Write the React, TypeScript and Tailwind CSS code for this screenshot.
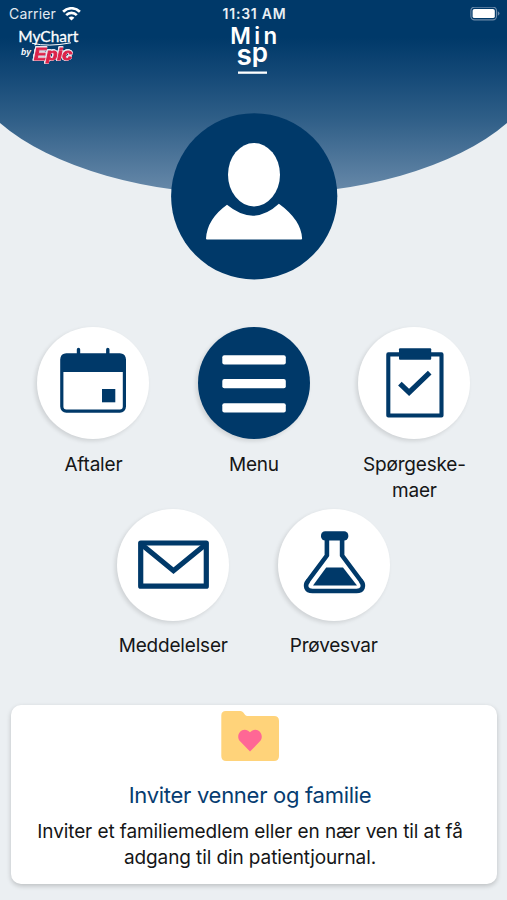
import type { ReactNode } from "react";

function StatusBar() {
  return (
    <div className="flex h-7 items-center justify-between pl-[9px] pr-[7px] text-white">
      <div className="flex w-[180px] items-center gap-[6px] text-[14px] leading-7 tracking-[0.15px] text-[#e3eaf1]">
        <span>Carrier</span>
        <svg width="19" height="15" viewBox="0 0 19 15" fill="none" stroke="white">
          <path d="M1.1 4.7 A12 12 0 0 1 17.9 4.7" strokeWidth="2.7" />
          <path d="M4.2 8.1 A7.4 7.4 0 0 1 14.8 8.1" strokeWidth="2.6" />
          <path d="M9.5 13.6 L6.6 10.7 A4.3 4.3 0 0 1 12.4 10.7 Z" fill="white" stroke="none" />
        </svg>
      </div>
      <div className="whitespace-nowrap text-[14px] font-semibold leading-7 tracking-[0.75px] text-[#e9eff4]">11:31 AM</div>
      <div className="flex w-[180px] justify-end">
        <svg width="30" height="14" viewBox="0 0 30 14" fill="none">
          <rect x="0.9" y="0.1" width="25.6" height="12.8" rx="3.6" stroke="#6c8baa" strokeWidth="1.1" />
          <rect x="2.6" y="1.9" width="22.2" height="9.2" rx="1.9" fill="white" />
          <path d="M27.8 4.2 q1.7 .7 1.7 2.3 q0 1.6 -1.7 2.3 Z" fill="#6c8baa" />
        </svg>
      </div>
    </div>
  );
}

function Logos() {
  return (
    <div className="flex h-[50px] justify-between pl-[17px] pr-[17px]">
      <svg className="overflow-visible" width="64" height="40" viewBox="0 0 64 40">
        <text x="1.2" y="14.3" textLength="60" lengthAdjust="spacingAndGlyphs" fill="white" fontFamily="Lato, sans-serif" fontSize="16" stroke="white" strokeWidth=".3">MyChart</text>
        <path d="M15 15.2 Q31 19.2 54 14.8" stroke="white" strokeWidth="1" fill="none" />
        <text x="4" y="27" fill="white" fontFamily="Liberation Sans, sans-serif" fontSize="8.5" fontWeight="700" fontStyle="italic">by</text>
        <text
          className="[filter:drop-shadow(0.6px_0_0_#e9e8f0)_drop-shadow(-0.6px_0_0_#e9e8f0)_drop-shadow(0_0.6px_0_#e9e8f0)_drop-shadow(0_-0.6px_0_#e9e8f0)]"
          x="17" y="31.8" textLength="38.5" lengthAdjust="spacingAndGlyphs" fill="#dc2249" stroke="#dc2249" strokeWidth=".9"
          fontFamily="Liberation Sans, sans-serif" fontSize="16" fontWeight="700" fontStyle="italic"
        >
          Epic
        </text>
      </svg>
      <svg className="overflow-visible" width="60" height="50" viewBox="224 28 60 50" fill="white" fontFamily="Inter, sans-serif" fontWeight="600">
        <text x="230.2" y="44" textLength="47" lengthAdjust="spacing" fontSize="22.3">Min</text>
        <text y="65.4">
          <tspan x="236.6" fontSize="28">s</tspan>
          <tspan x="251.8" dy="-3.2" fontSize="26">p</tspan>
        </text>
        <rect x="238" y="71.5" width="29" height="2.3" />
      </svg>
      <div className="w-16" />
    </div>
  );
}

function CalendarIcon() {
  return (
    <svg width="112" height="112" viewBox="0 0 112 112" fill="#003969">
      <path d="M41.5 22.5v6M70.8 22.5v6" stroke="#003969" strokeWidth="3.4" strokeLinecap="round" />
      <rect x="24.8" y="27.9" width="62.6" height="56.2" rx="4.5" fill="none" stroke="#003969" strokeWidth="3.2" />
      <path d="M24 45V31q0-4 4-4h56q4 0 4 4v14Z" />
      <rect x="65" y="62" width="13.3" height="13.3" />
    </svg>
  );
}

function MenuIcon() {
  return (
    <svg width="112" height="112" viewBox="0 0 112 112" fill="white">
      <rect x="24.3" y="28.3" width="63.5" height="9.2" rx="2" />
      <rect x="24.3" y="52" width="63.5" height="9.2" rx="2" />
      <rect x="24.3" y="76.3" width="63.5" height="9.2" rx="2" />
    </svg>
  );
}

function ClipboardIcon() {
  return (
    <svg width="112" height="112" viewBox="0 0 112 112" fill="none" stroke="#003969">
      <rect x="30.3" y="27.4" width="53.2" height="61.1" strokeWidth="4.1" strokeLinejoin="round" />
      <rect x="41" y="21.3" width="32.2" height="11.4" rx="1" fill="#003969" stroke="none" />
      <path d="M41.9 56.6l9.2 8.7L71.7 45.6" strokeWidth="5.2" />
    </svg>
  );
}

function EnvelopeIcon() {
  return (
    <svg width="112" height="112" viewBox="0 0 112 112" fill="none" stroke="#003969" strokeWidth="5.2">
      <rect x="23.7" y="34" width="65.6" height="43.2" strokeLinejoin="round" />
      <path d="M24.9 35.8L56.5 61.7L88.2 35.8" />
    </svg>
  );
}

function FlaskIcon() {
  return (
    <svg width="112" height="112" viewBox="0 0 112 112" fill="none" stroke="#003969">
      <path d="M48.9 28V46.5L30.3 71.5C26 77 28.3 82 34.5 82H78.5C84.7 82 87 77 82.7 71.5L64.1 46.5V28" strokeWidth="4.6" strokeLinejoin="round" />
      <rect x="43" y="22.2" width="27.3" height="9.4" rx="4.2" fill="#003969" stroke="none" />
      <path d="M48.2 58.6H65L79 76.6H35Z" fill="#003969" stroke="none" />
    </svg>
  );
}

function Tile({ icon, dark, children }: { icon: ReactNode; dark?: boolean; children: ReactNode }) {
  return (
    <div className="flex w-[160.5px] flex-col items-center">
      <div
        className={
          "flex h-[112px] w-[112px] items-center justify-center rounded-full shadow-[-2px_2px_4px_rgba(0,0,0,0.12)] " +
          (dark ? "bg-[#003969]" : "bg-white")
        }
      >
        {icon}
      </div>
      <div className="mt-[12.5px] text-center text-[19px] leading-[26px] tracking-[-0.2px] text-[#151617]">{children}</div>
    </div>
  );
}

function FolderIcon() {
  return (
    <svg className="shrink-0" width="60" height="52" viewBox="0 0 60 52">
      <path d="M1.3 5.5Q1.3 1 5.8 1H20.5Q22.3 1 23.3 2.5L25.2 5Q26 6 27.5 6H54Q59 6 59 11V46Q59 51 54 51H6.3Q1.3 51 1.3 46Z" fill="#ffd37a" />
      <path d="M30 41.5L20.3 31.6C14.7 25.8 21.5 16.5 28.1 20.8L30 22.3L31.9 20.8C38.5 16.5 45.3 25.8 39.7 31.6Z" fill="#ff6795" />
    </svg>
  );
}

export default function App() {
  return (
    <div className="relative isolate flex h-[900px] w-[507px] flex-col overflow-hidden bg-[#ebeff2] font-[Inter,sans-serif]">
      <svg className="absolute left-0 top-0 -z-10" width="507" height="200" viewBox="0 0 507 200">
        <defs>
          <linearGradient id="sky" gradientUnits="userSpaceOnUse" x1="0" y1="0" x2="0" y2="200">
            <stop offset="0" stopColor="#003969" />
            <stop offset=".19" stopColor="#003969" />
            <stop offset=".4" stopColor="#174b79" />
            <stop offset=".6" stopColor="#305f88" />
            <stop offset="1" stopColor="#6e8ead" />
          </linearGradient>
        </defs>
        <path d="M0 0H507V123A290 140 0 0 1 0 123Z" fill="url(#sky)" />
      </svg>
      <StatusBar />
      <Logos />
      <div className="mt-[35px] flex justify-center pl-px">
        <svg width="167" height="167" viewBox="0 0 167 167">
          <circle cx="83.2" cy="83.3" r="83.1" fill="#003969" />
          <ellipse cx="83" cy="61.7" rx="26" ry="31.7" fill="white" />
          <path d="M56 91.8Q82.9 114 107.9 90.8Q130.2 107 131.1 125.5Q131.1 126.5 130.1 126.5H36Q35 126.5 35 125.5Q36.2 106 56 91.8Z" fill="white" />
        </svg>
      </div>
      <div className="mt-[47px] flex justify-center pl-[0.8px]">
        <Tile icon={<CalendarIcon />}>Aftaler</Tile>
        <Tile dark icon={<MenuIcon />}>Menu</Tile>
        <Tile icon={<ClipboardIcon />}>
          Spørgeske-
          <br />
          maer
        </Tile>
      </div>
      <div className="mt-[5px] flex justify-center">
        <Tile icon={<EnvelopeIcon />}>Meddelelser</Tile>
        <Tile icon={<FlaskIcon />}>Prøvesvar</Tile>
      </div>
      <div className="mx-[10.5px] mt-[46px] flex h-[178.5px] flex-col items-center rounded-[10px] bg-white pt-[5px] shadow-[0_2px_5px_rgba(0,0,0,0.2)]">
        <div className="mr-[8px] flex">
          <FolderIcon />
        </div>
        <h2 className="mt-[17px] mr-[7px] whitespace-nowrap text-[22px] leading-8 tracking-[-0.28px] text-[#063c70]">Inviter venner og familie</h2>
        <p className="mt-[8px] mr-[7px] whitespace-nowrap text-center text-[19px] leading-[26px] tracking-[-0.1px] text-[#151617]">
          Inviter et familiemedlem eller en nær ven til at få
          <br />
          adgang til din patientjournal.
        </p>
      </div>
    </div>
  );
}
